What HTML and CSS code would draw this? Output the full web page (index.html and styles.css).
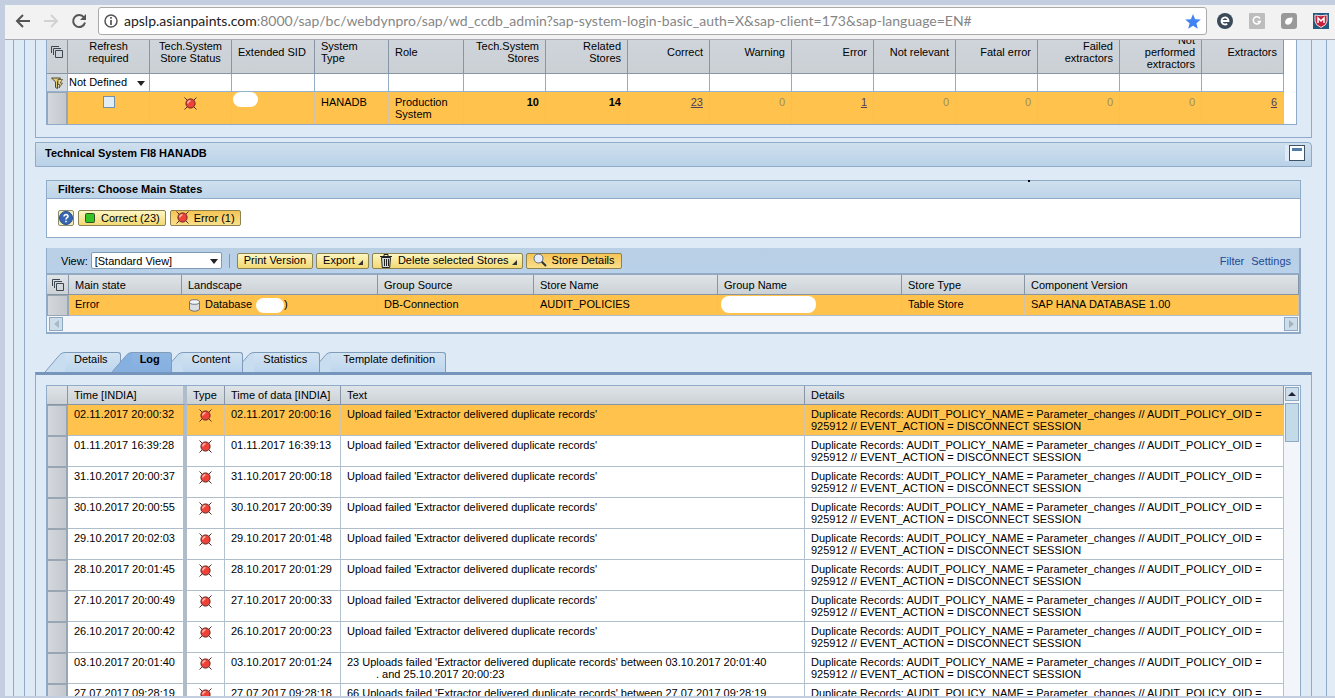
FILE: index.html
```html
<!DOCTYPE html>
<html lang="en">
<head>
    <meta charset="UTF-8">
    <meta name="viewport" content="width=device-width, initial-scale=1.0">
    <title>Configuration and Change Database</title>
    <link rel="stylesheet" href="styles.css">
</head>
<body>
    <svg class="defs" aria-hidden="true">
        <symbol id="icon-error" viewBox="0 0 13 13">
            <path d="M.5 .5l3 3M12.5 .5l-3 3M.5 12.5l3-3M12.5 12.5l-3-3" stroke="#5c2a1c" fill="none"/>
            <circle cx="6.500" cy="6.500" r="4.600" fill="#ee4138" stroke="#5f2622"/>
            <path d="M3.800 6.500a2.700 2.700 0 0 1 2.700-2.700" stroke="#ffb9a6" stroke-width="1.600" fill="none"/>
        </symbol>
        <symbol id="icon-select" viewBox="0 0 12 12">
            <path d="M.5 7V.5H8M2.500 9V2.500H10M4.500 4.500h7v7h-7z" fill="none" stroke="#3d4650"/>
        </symbol>
        <symbol id="slant" viewBox="0 0 20 20" preserveAspectRatio="none">
            <path d="M0 20L15 2.500Q17 .5 20 .5V20z"/>
            <path d="M0 20L15 2.500Q17 .5 20 .5" fill="none" stroke="#7f9dbb"/>
        </symbol>
    </svg>

    <div class="window">
        <header class="browser-bar">
            <button class="nav" aria-label="Back"><svg width="16" height="14" viewBox="0 0 16 14"><path d="M15 7H2M8 1L2 7l6 6" fill="none" stroke="#555" stroke-width="2"/></svg></button>
            <button class="nav" aria-label="Forward"><svg width="16" height="14" viewBox="0 0 16 14"><path d="M1 7h13M8 1l6 6-6 6" fill="none" stroke="#d2d2d2" stroke-width="2"/></svg></button>
            <button class="nav" aria-label="Reload"><svg width="16" height="16" viewBox="0 0 16 16"><path d="M13 4.500A6 6 0 1 0 14 9.500" fill="none" stroke="#555" stroke-width="2"/><path d="M15 1v6H9z" fill="#555"/></svg></button>
            <div class="address">
                <svg width="14" height="14" viewBox="0 0 14 14"><circle cx="7" cy="7" r="6" fill="none" stroke="#555" stroke-width="1.500"/><path d="M7 6v5M7 3v1.700" stroke="#555" stroke-width="1.700"/></svg>
                <span class="url"><b>apslp.asianpaints.com</b>:8000/sap/bc/webdynpro/sap/wd_ccdb_admin?sap-system-login-basic_auth=X&amp;sap-client=173&amp;sap-language=EN#</span>
                <svg width="16" height="15" viewBox="0 0 16 15"><path d="M8 0l2.100 5.200 5.700.4-4.400 3.600 1.400 5.600L8 11.700l-4.800 3.100 1.400-5.600L.2 5.600l5.700-.4z" fill="#4283f3"/></svg>
            </div>
            <div class="extensions">
                <svg width="16" height="16" viewBox="0 0 16 16"><circle cx="8" cy="8" r="8" fill="#3a4a58"/><path d="M4.500 8h7a3.500 3.500 0 1 0-1.300 2.700" fill="none" stroke="#fff" stroke-width="1.800"/></svg>
                <svg width="16" height="16" viewBox="0 0 16 16"><rect width="16" height="16" rx="1" fill="#bdbdbd"/><path d="M11 5.500A3.600 3.600 0 1 0 11.300 8.500H8.500" fill="none" stroke="#fff" stroke-width="1.500"/></svg>
                <svg width="16" height="16" viewBox="0 0 16 16"><rect width="16" height="16" rx="3" fill="#999"/><path d="M4.500 11C3 7 6 4 11.500 4.500 12 9 9 12.500 6 11.500z" fill="#fff"/></svg>
                <svg width="16" height="16" viewBox="0 0 16 16"><rect width="16" height="16" fill="#235a82"/><path d="M2 2q6 1.500 12 0v6q0 4-6 6.500Q2 12 2 8z" fill="#c4233b" stroke="#f4dfe2"/><path d="M5 10V5l3 3 3-3v5" fill="none" stroke="#fff" stroke-width="1.500"/></svg>
            </div>
        </header>

        <main class="page">
            <div class="frame">
                <div class="frame-inner">

                    <section class="systems">
                        <div class="systems-box">
                            <table class="grid systems-table">
                                <colgroup>
                                    <col class="c-sel"><col class="c-num"><col class="c-num"><col class="c-sid"><col class="c-type"><col>
                                    <col class="c-num"><col class="c-num"><col class="c-num"><col class="c-num"><col class="c-num">
                                    <col class="c-num"><col class="c-num"><col class="c-num"><col class="c-num"><col class="c-num">
                                </colgroup>
                                <thead>
                                    <tr>
                                        <th class="tool"><svg width="12" height="12"><use href="#icon-select"/></svg></th>
                                        <th class="center">Refresh<br>required</th>
                                        <th class="center">Tech.System<br>Store Status</th>
                                        <th>Extended SID</th>
                                        <th>System<br>Type</th>
                                        <th>Role</th>
                                        <th class="num">Tech.System<br>Stores</th>
                                        <th class="num">Related<br>Stores</th>
                                        <th class="num">Correct</th>
                                        <th class="num">Warning</th>
                                        <th class="num">Error</th>
                                        <th class="num">Not relevant</th>
                                        <th class="num">Fatal error</th>
                                        <th class="num">Failed<br>extractors</th>
                                        <th class="num">Not<br>performed<br>extractors</th>
                                        <th class="num">Extractors</th>
                                    </tr>
                                </thead>
                                <tbody>
                                    <tr class="filter-row">
                                        <td class="tool"><svg width="12" height="12" viewBox="0 0 12 12"><path d="M.5 1h9L6.500 5v6.500l-2-1V5z" fill="#e3cf75" stroke="#4e4a35"/><path d="M7 2.500h4.500L9 6h2.500L8 11l.8-3.500H7z" fill="#f4e08c" stroke="#4e4a35" stroke-width=".8"/></svg></td>
                                        <td>
                                            <span class="select-wrap">
                                                <select class="plain-select" aria-label="Refresh required"><option>Not Defined</option></select>
                                            </span>
                                        </td>
                                        <td></td><td></td><td></td><td></td><td></td><td></td><td></td><td></td><td></td><td></td><td></td><td></td><td></td><td></td>
                                    </tr>
                                    <tr class="selected">
                                        <td class="marker"></td>
                                        <td class="center"><input type="checkbox" class="check" aria-label="Refresh required"></td>
                                        <td class="center"><svg class="state" width="13" height="13"><use href="#icon-error"/></svg></td>
                                        <td class="flush"><span class="blank blank-sid"></span></td>
                                        <td>HANADB</td>
                                        <td>Production System</td>
                                        <td class="num"><strong>10</strong></td>
                                        <td class="num"><strong>14</strong></td>
                                        <td class="num"><a href="#">23</a></td>
                                        <td class="num zero">0</td>
                                        <td class="num"><a href="#">1</a></td>
                                        <td class="num zero">0</td>
                                        <td class="num zero">0</td>
                                        <td class="num zero">0</td>
                                        <td class="num zero">0</td>
                                        <td class="num"><a href="#">6</a></td>
                                    </tr>
                                </tbody>
                            </table>
                        </div>
                    </section>

                    <div class="section-title">
                        <h2>Technical System FI8 HANADB</h2>
                        <button class="collapse" aria-label="Collapse"></button>
                    </div>

                    <section class="filters">
                        <h3>Filters: Choose Main States</h3>
                        <div class="filters-body">
                            <button class="help" aria-label="Help"><svg width="14" height="14" viewBox="0 0 14 14"><circle cx="7" cy="7" r="6.500" fill="#3566b3" stroke="#274c8c"/><path d="M5 5.500C5 2.800 9.300 3 9 5.500 8.800 6.700 7 6.800 7 8.400M7 9.700v1.500" fill="none" stroke="#fff" stroke-width="1.600"/></svg></button>
                            <button class="btn"><svg width="12" height="12" viewBox="0 0 12 12"><rect x="1.500" y="1.500" width="9" height="9" rx="1" fill="#35c424" stroke="#34502b"/></svg>Correct (23)</button>
                            <button class="btn pressed"><svg width="13" height="13"><use href="#icon-error"/></svg>Error (1)</button>
                        </div>
                        <span class="speck"></span>
                    </section>

                    <section class="stores">
                        <div class="toolbar">
                            <label for="view">View:</label>
                            <span class="select-wrap">
                                <select id="view" class="view-select"><option>[Standard View]</option></select>
                            </span>
                            <span class="separator"></span>
                            <button class="btn">Print Version</button>
                            <button class="btn">Export<i class="corner"></i></button>
                            <button class="btn"><svg width="14" height="15" viewBox="0 0 14 15"><path d="M2.500 4.500h9l-.8 10H3.300z" fill="#d5d8dc" stroke="#222"/><path d="M1 3.500h12M5 3V1.500h4V3M5.500 6v7M7.500 6v7M9.500 6v7" fill="none" stroke="#222"/></svg>Delete selected Stores<i class="corner"></i></button>
                            <button class="btn pressed"><svg width="14" height="14" viewBox="0 0 14 14"><path d="M8 8l5 5" stroke="#333" stroke-width="2"/><circle cx="5.500" cy="5.500" r="4.500" fill="#e5eef8" stroke="#596a80"/></svg>Store Details</button>
                            <div class="toolbar-links"><a href="#">Filter</a><a href="#">Settings</a></div>
                        </div>
                        <table class="grid stores-table">
                            <colgroup>
                                <col class="c-sel"><col class="c-state"><col class="c-land"><col class="c-source"><col class="c-group"><col class="c-group"><col class="c-store"><col>
                            </colgroup>
                            <thead>
                                <tr>
                                    <th class="tool"><svg width="12" height="12"><use href="#icon-select"/></svg></th>
                                    <th>Main state</th>
                                    <th>Landscape</th>
                                    <th>Group Source</th>
                                    <th>Store Name</th>
                                    <th>Group Name</th>
                                    <th>Store Type</th>
                                    <th>Component Version</th>
                                </tr>
                            </thead>
                            <tbody>
                                <tr class="selected">
                                    <td class="marker"></td>
                                    <td>Error</td>
                                    <td>
                                        <div class="landscape">
                                            <svg width="13" height="13" viewBox="0 0 13 13"><path d="M1.500 3v7.500q5 3.500 10 0V3z" fill="#d9dee2" stroke="#6e747a"/><ellipse cx="6.500" cy="3" rx="5" ry="2.300" fill="#f4f6f7" stroke="#6e747a"/></svg>
                                            Database <span class="blank blank-db"></span><span>)</span>
                                        </div>
                                    </td>
                                    <td>DB-Connection</td>
                                    <td>AUDIT_POLICIES</td>
                                    <td class="flush"><span class="blank blank-group"></span></td>
                                    <td>Table Store</td>
                                    <td>SAP HANA DATABASE 1.00</td>
                                </tr>
                            </tbody>
                        </table>
                        <div class="hscroll">
                            <button class="scroll-btn" aria-label="Scroll left"><svg width="5" height="8" viewBox="0 0 5 8"><path d="M5 0v8L0 4z" fill="#a9b9c4"/></svg></button>
                            <button class="scroll-btn" aria-label="Scroll right"><svg width="5" height="8" viewBox="0 0 5 8"><path d="M0 0v8l5-4z" fill="#a9b1b8"/></svg></button>
                        </div>
                    </section>

                    <nav class="tabs">
                        <button class="tab"><svg width="20" height="20"><use href="#slant"/></svg><span>Details</span></button>
                        <button class="tab active"><svg width="20" height="20"><use href="#slant"/></svg><span>Log</span></button>
                        <button class="tab"><svg width="20" height="20"><use href="#slant"/></svg><span>Content</span></button>
                        <button class="tab"><svg width="20" height="20"><use href="#slant"/></svg><span>Statistics</span></button>
                        <button class="tab"><svg width="20" height="20"><use href="#slant"/></svg><span>Template definition</span></button>
                    </nav>

                    <section class="tab-panel">
                        <div class="log">
                            <table class="grid log-table">
                                <colgroup>
                                    <col class="c-sel"><col class="c-time"><col class="c-icon"><col class="c-data"><col><col class="c-details">
                                </colgroup>
                                <thead>
                                    <tr>
                                        <th></th>
                                        <th class="fixed-edge">Time [INDIA]</th>
                                        <th>Type</th>
                                        <th>Time of data [INDIA]</th>
                                        <th>Text</th>
                                        <th>Details</th>
                                    </tr>
                                </thead>
                                <tbody id="logRows"></tbody>
                            </table>
                            <div class="vscroll">
                                <button class="scroll-btn" aria-label="Scroll up"><svg width="8" height="4" viewBox="0 0 8 4"><path d="M0 4h8L4 0z" fill="#223"/></svg></button>
                                <div class="thumb"></div>
                            </div>
                        </div>
                    </section>

                </div>
            </div>
        </main>
    </div>

    <script src="script.js"></script>
</body>
</html>
```

FILE: styles.css
```css
* {
    box-sizing: border-box;
}

body {
    margin: 0;
    font-family: "Liberation Sans", Arial, sans-serif;
    font-size: 11px;
    line-height: 12px;
    color: #000;
}

button,
select {
    font: inherit;
    color: inherit;
    margin: 0;
}

svg {
    flex: none;
}

.defs {
    position: absolute;
    width: 0;
    height: 0;
}

.window {
    height: 100vh;
    display: flex;
    flex-direction: column;
    padding: 5px 0 2px 5px;
    background-color: #c3cee1;
    overflow: hidden;
}

/* Browser bar */
.browser-bar {
    flex: none;
    height: 35px;
    display: flex;
    align-items: center;
    padding: 0 0 3px 9px;
    background-color: #f2f2f2;
    border-bottom: 1px solid #a9adb3;
}

.nav {
    display: flex;
    align-items: center;
    justify-content: center;
    width: 28px;
    height: 24px;
    padding: 0 10px 0 0;
    border: none;
    background: none;
}

.address {
    flex: 1;
    display: flex;
    align-items: center;
    height: 28px;
    margin-top: 1px;
    padding: 0 5px;
    background-color: #fff;
    border: 1px solid #aaa;
    border-radius: 3px;
}

.url {
    flex: 1;
    margin-left: 6px;
    font-family: Lato, "Open Sans", sans-serif;
    font-size: 14px;
    line-height: 24px;
    color: #868686;
    white-space: nowrap;
    overflow: hidden;
}

.url b {
    font-weight: normal;
    color: #222;
}

.extensions {
    display: flex;
    gap: 16px;
    padding: 0 6px 0 10px;
}

/* Page frame */
.page {
    flex: 1;
    min-height: 0;
    overflow: hidden;
    background-color: #e2ecf6;
}

.frame {
    margin: 0 8px;
    border: 1px solid #8fabc8;
    border-width: 0 1px;
    background-color: #deebf6;
}

.frame-inner {
    margin-left: 10px;
    padding: 0 14px 0 10px;
    border-left: 1px solid #8fabc8;
}

/* Shared grid look */
.grid {
    width: 100%;
    table-layout: fixed;
    border-collapse: separate;
    border-spacing: 0;
    background-color: #fff;
}

.grid th,
.grid td {
    padding: 3px 6px;
    text-align: left;
    vertical-align: top;
    font-weight: normal;
    border-right: 1px solid #b4c2d0;
    border-bottom: 1px solid #b0bdca;
}

.grid th {
    height: 20px;
    padding: 4px 6px 3px;
    vertical-align: middle;
    background: linear-gradient(#dee4e8, #cbd1d5);
    border-right-color: #8795a5;
    border-bottom-color: #8795a5;
    white-space: nowrap;
}

.grid .num {
    text-align: right;
}

.grid .center {
    text-align: center;
}

.grid .tool {
    padding: 0;
    text-align: center;
    vertical-align: middle;
    background-color: #d3dae0;
}

.grid .tool svg,
.state {
    display: block;
    margin: 0 auto;
}

.state {
    margin-top: 1px;
}

.grid .flush {
    padding: 0 3px;
}

.grid .marker {
    padding: 0;
    background: linear-gradient(90deg, #d4d8dd, #c3c8ce);
    border: 2px solid #98a5b2;
    border-width: 1px 2px 1px 1px;
}

.selected td {
    background-color: #ffc34d;
    border-right-color: #d3c3a4;
}

.c-sel { width: 21px; }
.c-num { width: 82px; }
.c-sid { width: 83px; }
.c-type { width: 74px; }

/* Systems table */
.systems {
    margin-top: -10px;
    padding: 0 14px 12px 10px;
    border: 1px solid #8fabc8;
    border-top: none;
}

.systems-box {
    padding-right: 12px;
    background-color: #fff;
    border: 1px solid #8fabc8;
    border-top: none;
}

.systems-table th {
    height: 44px;
    padding: 0 6px;
    background: linear-gradient(#d0d6dc, #cbd0d5);
}

.filter-row td {
    height: 18px;
    padding: 0;
    border-right-color: #93acc6;
    border-bottom-color: #93b2d4;
}

.systems-table .selected td {
    height: 32px;
    padding-top: 4px;
    border-bottom: none;
}

.systems-table .selected .flush {
    padding-top: 0;
}

.systems-table a {
    color: #54405a;
}

.systems-table .zero {
    color: #9f8b5e;
}

.check {
    appearance: none;
    display: block;
    width: 12px;
    height: 12px;
    margin: 0 auto;
    background-color: #e2ecf5;
    border: 1px solid #7291ad;
}

.select-wrap {
    position: relative;
    display: block;
}

.select-wrap::after {
    content: "";
    position: absolute;
    right: 4px;
    top: 7px;
    border: 4px solid transparent;
    border-top: 5px solid #222;
    border-bottom: none;
    pointer-events: none;
}

.plain-select {
    appearance: none;
    display: block;
    width: 100%;
    height: 16px;
    padding: 0 0 0 1px;
    border: none;
    background: none;
}

/* Blanked out values */
.blank {
    display: block;
    background-color: #fff;
    border-radius: 8px;
}

.blank-sid {
    width: 25px;
    height: 15px;
    margin-left: -2px;
}

.blank-db {
    width: 28px;
    height: 15px;
    margin-left: 4px;
}

.blank-group {
    width: 95px;
    height: 17px;
    margin-top: 1px;
}

/* Section title */
.section-title {
    display: flex;
    align-items: center;
    justify-content: space-between;
    height: 25px;
    margin: 4px 0 13px;
    padding: 0 6px 3px 9px;
    background: linear-gradient(#cfe0ee, #b9d1e8);
    border: 1px solid #8fabc8;
    border-top-right-radius: 4px;
}

h2,
h3 {
    margin: 0;
    font-size: 11px;
    line-height: 12px;
    font-weight: bold;
}

.collapse {
    width: 16px;
    height: 16px;
    padding: 0;
    border: 1px solid #3c5266;
    background: linear-gradient(#4f7ea8, #4f7ea8) 2px 2px / 10px 3px no-repeat #fff;
    box-shadow: -4px 0 0 #deebf6;
}

/* Filters */
.filters {
    position: relative;
    margin: 0 11px 10px;
    background-color: #fff;
    border: 1px solid #8fabc8;
}

.filters h3 {
    padding: 2px 11px 3px;
    background: linear-gradient(#cfe0ee, #bdd4e9);
    border-bottom: 1px solid #8fabc8;
}

.filters-body {
    display: flex;
    align-items: center;
    gap: 4px;
    height: 38px;
    padding: 0 11px;
}

.help {
    display: flex;
    align-items: center;
    justify-content: center;
    width: 16px;
    height: 16px;
    padding: 0;
    border: 1px solid #8a8c72;
    border-radius: 2px;
    background-color: #f4edb5;
}

.speck {
    position: absolute;
    left: 981px;
    top: -1px;
    width: 2px;
    height: 2px;
    background-color: #000;
}

.btn {
    display: flex;
    align-items: center;
    gap: 5px;
    height: 16px;
    padding: 0 5px 1px;
    border: 1px solid #8c8350;
    border-radius: 2px;
    background: linear-gradient(#fdf6c3, #f3d973);
    white-space: nowrap;
}

.btn.pressed {
    background: linear-gradient(#f5c456, #fbdf8b);
}

.corner {
    align-self: flex-end;
    margin: 0 -1px 2px -2px;
    border-left: 5px solid transparent;
    border-bottom: 5px solid #333;
}

/* Stores */
.stores {
    margin: 0 11px;
    border: 2px solid #8fabc8;
    border-width: 0 2px 2px 1px;
}

.toolbar {
    display: flex;
    align-items: center;
    gap: 3px;
    height: 27px;
    padding: 0 8px 0 14px;
    background: linear-gradient(#b9cfe4, #b9d1ea);
    border-bottom: 2px solid #93aac4;
}

.toolbar .btn {
    padding: 0 6px 1px;
}

.view-select {
    appearance: none;
    width: 131px;
    height: 17px;
    padding: 0 3px;
    border: 1px solid #7e9ab5;
    border-radius: 2px;
    background-color: #fff;
}

.separator {
    width: 1px;
    height: 14px;
    margin: 0 4px;
    background-color: #7d97b2;
}

.toolbar-links {
    display: flex;
    gap: 7px;
    margin-left: auto;
}

.toolbar-links a {
    color: #1f4a94;
    text-decoration: none;
}

.stores-table .selected td {
    height: 21px;
}

.landscape {
    display: flex;
    height: 12px;
}

.landscape svg {
    margin: 1px 4px 0 0;
}

.stores-table .c-sel { width: 22px; }
.c-state { width: 113px; }
.c-land { width: 196px; }
.c-source { width: 156px; }
.c-group { width: 184px; }
.c-store { width: 123px; }

.hscroll {
    display: flex;
    justify-content: space-between;
    padding: 1px 1px 1px 2px;
    background-color: #f2f5f9;
}

.scroll-btn {
    display: flex;
    align-items: center;
    justify-content: center;
    width: 14px;
    height: 14px;
    padding: 0;
    border: 1px solid #8fa9c0;
    background-color: #ccdeeb;
}

/* Tabs */
.tabs {
    display: flex;
    margin: 18px 0 0 10px;
}

.tab {
    position: relative;
    display: flex;
    height: 20px;
    margin-right: -9px;
    padding: 0;
    border: none;
    background: none;
}

.tab svg {
    fill: #c8ddf0;
}

.tab span {
    height: 20px;
    padding: 0 12px 0 9px;
    background: linear-gradient(#d2e3f1, #bdd6ee);
    border-top: 1px solid #7f9dbb;
    border-right: 1px solid #7f9dbb;
    border-top-right-radius: 3px;
}

.tab:nth-child(3) { z-index: 4; }
.tab:nth-child(4) { z-index: 3; }
.tab:nth-child(5) { z-index: 2; }

.tab:last-child span {
    padding: 0 10px 0 12px;
}

.tab.active {
    z-index: 5;
    font-weight: bold;
}

.tab.active span {
    padding: 0 11px 0 8px;
    background: linear-gradient(#8fb6e2, #85aee0);
}

.tab.active svg {
    fill: #86b0e0;
}

.tab-panel {
    padding: 10px 10px 0;
    border: 1px solid #8fabc8;
    border-top: 3px solid #7695bb;
}

/* Log */
.log {
    display: flex;
    border: 1px solid #8fabc8;
}

.log-table {
    flex: 1;
    width: auto;
    min-width: 0;
}

.log-table th {
    height: 19px;
    padding: 3px 6px;
}

.log-table td {
    height: 31px;
}

.log-table .fixed-edge {
    border-right: 4px solid #afbccb;
}

.log-table .second-line {
    padding-left: 29px;
}

.c-time { width: 119px; }
.c-icon { width: 38px; }
.c-data { width: 116px; }
.c-details { width: 479px; }

.vscroll {
    width: 16px;
    padding: 1px;
    background-color: #f2f6fa;
}

.thumb {
    width: 14px;
    height: 39px;
    margin-top: 2px;
    border: 1px solid #8fa9c0;
    background-color: #c3dae9;
}
```

FILE: script.js
```js
const failed = "Upload failed 'Extractor delivered duplicate records'";
const details = 'Duplicate Records: AUDIT_POLICY_NAME = Parameter_changes // AUDIT_POLICY_OID =<br>925912 // EVENT_ACTION = DISCONNECT SESSION';

const entries = [
    ['02.11.2017 20:00:32', '02.11.2017 20:00:16', failed],
    ['01.11.2017 16:39:28', '01.11.2017 16:39:13', failed],
    ['31.10.2017 20:00:37', '31.10.2017 20:00:18', failed],
    ['30.10.2017 20:00:55', '30.10.2017 20:00:39', failed],
    ['29.10.2017 20:02:03', '29.10.2017 20:01:48', failed],
    ['28.10.2017 20:01:45', '28.10.2017 20:01:29', failed],
    ['27.10.2017 20:00:49', '27.10.2017 20:00:33', failed],
    ['26.10.2017 20:00:42', '26.10.2017 20:00:23', failed],
    ['03.10.2017 20:01:40', '03.10.2017 20:01:24', "23 Uploads failed 'Extractor delivered duplicate records' between 03.10.2017 20:01:40<br><span class=\"second-line\">. and 25.10.2017 20:00:23</span>"],
    ['27.07.2017 09:28:19', '27.07.2017 09:28:18', "66 Uploads failed 'Extractor delivered duplicate records' between 27.07.2017 09:28:19"]
];

document.getElementById('logRows').innerHTML = entries.map((entry, i) => `
    <tr class="${i === 0 ? 'selected' : ''}">
        <td class="marker"></td>
        <td class="fixed-edge">${entry[0]}</td>
        <td><svg class="state" width="13" height="13"><use href="#icon-error"/></svg></td>
        <td>${entry[1]}</td>
        <td>${entry[2]}</td>
        <td>${details}</td>
    </tr>
`).join('');
```
